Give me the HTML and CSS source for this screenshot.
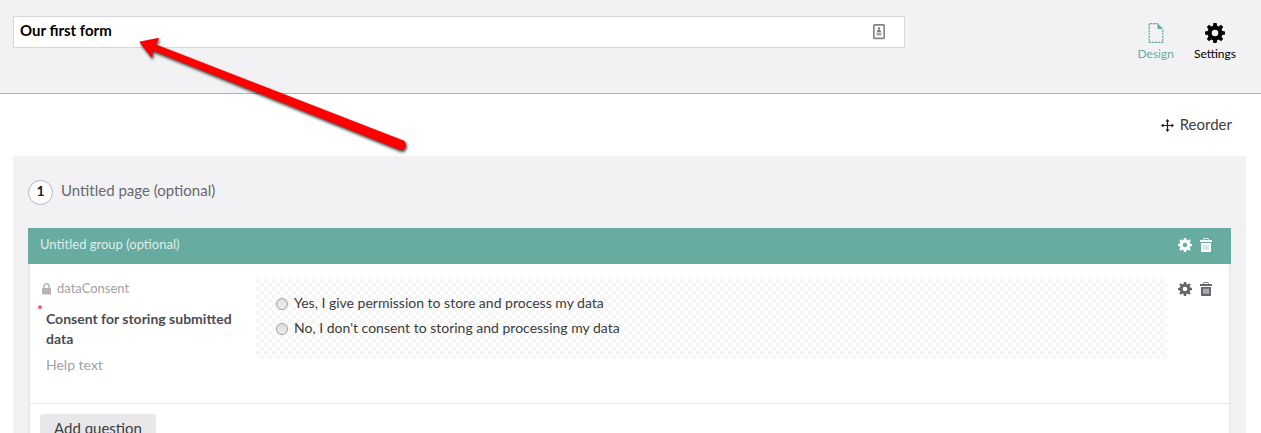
FILE: index.html
```
<!DOCTYPE html>
<html lang="en">
<head>
<meta charset="utf-8">
<title>Our first form</title>
<link rel="stylesheet" href="styles.css">
</head>
<body>
<svg class="defs" width="0" height="0" aria-hidden="true">
  <symbol id="gear" viewBox="0 0 20 20">
    <path fill-rule="evenodd" d="M8.4 0h3.2l.5 2.7 1.7.7L16 1.8 18.2 4l-1.6 2.2.7 1.7 2.7.5v3.2l-2.7.5-.7 1.7 1.6 2.2-2.2 2.2-2.2-1.6-1.7.7-.5 2.7H8.4l-.5-2.7-1.7-.7L4 18.2 1.8 16l1.6-2.2-.7-1.7L0 11.6V8.4l2.7-.5.7-1.7L1.8 4 4 1.8l2.2 1.6 1.7-.7zM10 6.7a3.3 3.3 0 1 0 0 6.6 3.3 3.3 0 0 0 0-6.6z"/>
  </symbol>
  <symbol id="trash" viewBox="0 0 12 14">
    <path d="M3.5 2.2V1.4Q3.500 .5 4.500 .5h3q1 0 1 1v.8" fill="none" stroke="currentColor" stroke-width=".9"/>
    <path d="M.5 2h11q.5 0 .5.6V4H0V2.6Q0 2 .5 2z"/>
    <path d="M1 5h10v8.2q0 .8-.8.8H1.8q-.8 0-.8-.8z"/>
    <path class="slots" d="M3 6.7h6.2v5.1H3z"/>
  </symbol>
</svg>

<header class="header">
  <div class="name-field">
    <span>Our first form</span>
    <svg class="card-icon" width="12" height="16" viewBox="0 0 12 16"><rect x=".8" y=".8" width="10.4" height="13.6" rx="1" fill="#fff" stroke="#858585" stroke-width="1.7"/><circle cx="6" cy="4.5" r="1.2" fill="#777"/><path d="M4 8q0-2.300 2-2.300t2 2.300z" fill="#777"/><path d="M3.500 8.500h5v3h-5z" fill="#aaa"/></svg>
  </div>
  <nav class="tabs">
    <a class="tab design">
      <svg width="20" height="20" viewBox="0 0 20 20"><path d="M12 .7H3.2v18.6h13.6V6" fill="none" stroke="currentColor" stroke-width="1.2" stroke-dasharray="2.4 .6"/><path d="M11.5.2 17.3 6h-4.8q-1 0-1-1z" fill="currentColor"/></svg>
      <span>Design</span>
    </a>
    <a class="tab">
      <svg width="20" height="20"><use href="#gear"/></svg>
      <span>Settings</span>
    </a>
  </nav>
</header>

<main class="main">
  <div class="toolbar">
    <svg width="13" height="13" viewBox="0 0 13 13"><path d="M6.5 1.5v10M1.5 6.5h10" stroke="#1b1b1b" stroke-width="1.2"/><path d="m6.5 0 2 2.500H4.500zM6.500 13l2-2.500H4.500zM0 6.500l2.500-2v4zM13 6.500l-2.500-2v4z"/></svg>
    <span>Reorder</span>
  </div>
  <section class="page">
    <div class="page-title"><span class="number">1</span><span class="page-name">Untitled page (optional)</span></div>
    <div class="group">
      <div class="group-header">
        <span>Untitled group (optional)</span>
        <span class="actions"><svg width="14" height="14"><use href="#gear"/></svg><svg width="12" height="14"><use href="#trash"/></svg></span>
      </div>
      <div class="group-body">
        <div class="question">
          <div class="info">
            <div class="alias"><svg width="9" height="12" viewBox="0 0 9 12"><path d="M2 5.5V3.3a2.5 2.5 0 0 1 5 0v2.2" fill="none" stroke="#b3b3b8" stroke-width="1.5"/><rect y="5" width="9" height="6.5" rx=".5" fill="#b3b3b8"/></svg><span>dataConsent</span></div>
            <div class="label"><span class="required">*</span>Consent for storing submitted data</div>
            <div class="help">Help text</div>
          </div>
          <div class="preview">
            <div class="option"><span class="radio"></span><span>Yes, I give permission to store and process my data</span></div>
            <div class="option"><span class="radio"></span><span>No, I don't consent to storing and processing my data</span></div>
          </div>
          <span class="actions dark"><svg width="14" height="14"><use href="#gear"/></svg><svg width="12" height="14"><use href="#trash"/></svg></span>
        </div>
        <div class="footer"><span class="add">Add question</span></div>
      </div>
    </div>
  </section>
</main>

<svg class="arrow" width="290" height="130" viewBox="130 30 290 130">
  <path d="M140.300 41.500 157.700 38Q159.500 38 158.500 40L155.500 44.300 403.500 140.500A5.200 5.200 0 0 1 400 150L152.500 50.500V56.500Q152 58.500 150.600 56.500L140 43Q139.500 42 140.300 41.500Z"/>
</svg>
</body>
</html>
```
FILE: styles.css
```
* { box-sizing: border-box; }
body {
  margin: 0;
  height: 433px;
  overflow: hidden;
  position: relative;
  background: #fff;
  color: #3c3c3c;
  font: 15px/20px Lato, sans-serif;
}
svg { display: block; flex: none; fill: currentColor; }
.defs { position: absolute; }

.header {
  display: flex;
  justify-content: space-between;
  align-items: flex-start;
  height: 94px;
  padding: 16px 25px 0 13px;
  background: #f2f2f5;
  border-bottom: 1px solid #b0b0b9;
}
.name-field {
  display: flex;
  justify-content: space-between;
  width: 892px;
  height: 32px;
  padding: 3px 19px 0 6px;
  background: #fff;
  border: 1px solid #d8d8db;
  color: #000;
  font-weight: 700;
}
.card-icon { margin-top: 4px; }
.tabs { display: flex; gap: 20px; padding-top: 7px; }
.tab {
  display: flex;
  flex-direction: column;
  align-items: center;
  color: #000;
  font-size: 12px;
  line-height: 22px;
}
.design { color: #68aba1; }

.main { padding: 0 15px 0 13px; }
.toolbar {
  display: flex;
  align-items: flex-start;
  justify-content: flex-end;
  gap: 6px;
  height: 62px;
  padding: 20px 14px 0 0;
}
.toolbar svg { margin-top: 5px; color: #1b1b1b; }
.page { height: 277px; padding: 24px 15px 0; background: #f2f2f5; overflow: hidden; }
.page-title { display: flex; height: 48px; gap: 8px; color: #68686f; }
.number {
  width: 25px;
  height: 25px;
  border: 1px solid #b6b6bd;
  border-radius: 50%;
  background: #fff;
  color: #1b1b1b;
  font-size: 14px;
  font-weight: 700;
  line-height: 20px;
  text-align: center;
}
.page-name { line-height: 20px; }
.group-header {
  --slot: #d5e8e5;
  display: flex;
  justify-content: space-between;
  height: 36px;
  padding: 6px 19px 0 12px;
  background: #68aba1;
  color: #dcefec;
  font-size: 13px;
}
.actions { display: flex; gap: 8px; padding-top: 4px; color: #fff; }
.slots { fill: var(--slot); }
.dark { --slot: #aaaaae; padding-top: 3px; color: #65656a; }
.group-body { height: 169px; background: #fff; border: solid #e8e8eb; border-width: 0 2px; }
.question {
  display: flex;
  height: 140px;
  padding: 15px 17px 0 10px;
  border-bottom: 1px solid #e4e4e7;
  font-size: 14px;
}
.info { width: 216px; }
.alias { display: flex; align-items: center; gap: 6px; height: 20px; padding: 0 0 1px 2px; color: #a2a2a7; font-size: 13px; }
.alias span { line-height: 20px; padding-bottom: 2px; }
.label { position: relative; width: 196px; padding: 10px 0 0 6px; color: #4b4b50; font-weight: 700; }
.required { position: absolute; left: -3px; top: 5px; color: #e33f2d; font-size: 14px; line-height: 12px; }
.help { padding: 6px 0 0 6px; color: #a2a2a7; }
.preview {
  width: 911px;
  height: 80px;
  padding: 12px 20px;
  background: repeating-conic-gradient(#f5f5f5 0 25%, #fff 0 50%) 4px 0 / 8px 8px;
}
.option { display: flex; align-items: center; gap: 6px; height: 25px; padding-bottom: 1px; }
.radio {
  width: 12px;
  height: 12px;
  margin-top: 2px;
  border: 1px solid #a3a3a3;
  border-radius: 50%;
  background: linear-gradient(#dedede, #ededed);
}
.question .actions { margin-left: 11px; }
.footer { padding: 10px 10px 0; }
.add {
  display: inline-block;
  height: 32px;
  padding: 4px 14px;
  border-radius: 3px;
  background: #e8e8eb;
}
.arrow {
  position: absolute;
  left: 130px;
  top: 30px;
  fill: #f00;
  filter: drop-shadow(1.5px 2px 1.5px rgba(0, 0, 0, .75));
}
```
